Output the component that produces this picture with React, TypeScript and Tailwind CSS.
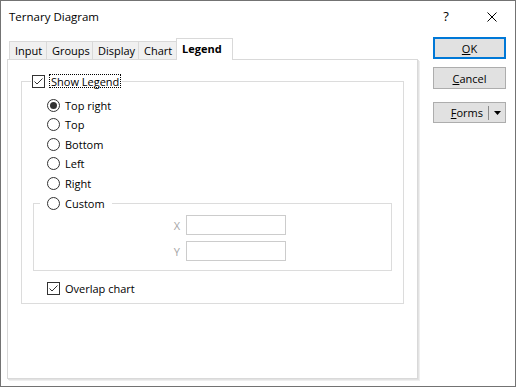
import React from "react";

const font = "font-['Segoe_UI','Open_Sans',sans-serif]";

function CheckBox({ checked }: { checked: boolean }) {
  return (
    <span className="w-[13px] h-[13px] border border-[#333333] bg-white shrink-0 flex items-center justify-center">
      {checked && (
        <svg width="11" height="11" viewBox="0 0 11 11">
          <polyline points="1.5,5.5 4,8 9.5,2.5" fill="none" stroke="#333333" strokeWidth="1" />
        </svg>
      )}
    </span>
  );
}

function Radio({ checked }: { checked: boolean }) {
  return (
    <span className="w-[13px] h-[13px] rounded-full border border-[#333333] bg-white shrink-0 flex items-center justify-center">
      {checked && <span className="w-[7px] h-[7px] rounded-full bg-[#333333]" />}
    </span>
  );
}

function RadioRow({ label, checked = false, h }: { label: string; checked?: boolean; h: string }) {
  return (
    <div className={`flex items-center gap-[5px] pl-[14px] ${h}`}>
      <Radio checked={checked} />
      <span>{label}</span>
    </div>
  );
}

export default function App() {
  return (
    <div className={`w-[516px] h-[387px] border border-[#737373] bg-white text-[11px] text-black leading-none ${font} flex flex-col`}>
      {/* Title bar */}
      <div className="h-[31px] flex items-center shrink-0">
        <span className="pl-[8px] text-[11.5px]">Ternary Diagram</span>
        <div className="ml-auto flex items-center">
          <span className="w-[46px] text-center text-[13px]">?</span>
          <span className="w-[46px] flex justify-center">
            <svg width="10" height="10" viewBox="0 0 10 10">
              <path d="M0.5 0.5 L9.5 9.5 M9.5 0.5 L0.5 9.5" stroke="#000" strokeWidth="1" />
            </svg>
          </span>
        </div>
      </div>

      {/* Main */}
      <div className="flex pl-[6px]">
        {/* Left: tabs + panel */}
        <div className="w-[411px] flex flex-col">
          <div className="flex items-end h-[21px] mt-[6px] ml-[2px]">
            <div className="h-[18px] w-[37px] border-t border-l border-[#d9d9d9] bg-[#f0f0f0] flex items-center pl-[5px]">Input</div>
            <div className="h-[18px] w-[46px] border-t border-l border-[#d9d9d9] bg-[#f0f0f0] flex items-center pl-[5px]">Groups</div>
            <div className="h-[18px] w-[46px] border-t border-l border-[#d9d9d9] bg-[#f0f0f0] flex items-center pl-[5px]">Display</div>
            <div className="h-[18px] w-[38px] border-t border-l border-[#d9d9d9] bg-[#f0f0f0] flex items-center pl-[5px]">Chart</div>
            <div className="relative z-10 h-[22px] w-[57px] -mb-[1px] border-t border-l border-r border-[#d9d9d9] bg-white flex items-center pl-[5px] pb-[2px] font-bold">Legend</div>
          </div>
          <div className="h-[320px] border border-[#d9d9d9] bg-white shadow-[1px_1px_0_#e2e2e2,2px_2px_0_#efefef]">
            <fieldset className="mt-[14px] ml-[13px] w-[383px] border border-[#dcdcdc]">
              <legend className="ml-[9px] pl-[1px] pr-[1px]">
                <div className="flex items-center gap-[4px] h-[14px]">
                  <CheckBox checked />
                  <span className="h-[14px] border border-dotted border-black px-[1px] flex items-center">Show Legend</span>
                </div>
              </legend>
              <div className="pt-[7px] px-[11px] pb-[5px]">
                <RadioRow label="Top right" checked h="h-[20px]" />
                <RadioRow label="Top" h="h-[19px]" />
                <RadioRow label="Bottom" h="h-[20px]" />
                <RadioRow label="Left" h="h-[19px]" />
                <RadioRow label="Right" h="h-[20px]" />
                <fieldset className="border border-[#dcdcdc]">
                  <legend className="ml-[6px] pl-[7px] pr-[7px]">
                    <div className="flex items-center gap-[5px] h-[20px]">
                      <Radio checked={false} />
                      <span>Custom</span>
                    </div>
                  </legend>
                  <div className="pt-[2px] pb-[9px] flex flex-col gap-[6px]">
                    <div className="flex items-center h-[20px]">
                      <span className="w-[152px] text-right pr-[6px] text-[#a6a6a6]">X</span>
                      <span className="w-[100px] h-[20px] border border-[#cccccc] bg-white" />
                    </div>
                    <div className="flex items-center h-[20px]">
                      <span className="w-[152px] text-right pr-[6px] text-[#a6a6a6]">Y</span>
                      <span className="w-[100px] h-[20px] border border-[#cccccc] bg-white" />
                    </div>
                  </div>
                </fieldset>
                <div className="mt-[7px] h-[20px] flex items-center gap-[5px] pl-[14px]">
                  <CheckBox checked />
                  <span>Overlap chart</span>
                </div>
              </div>
            </fieldset>
          </div>
        </div>

        {/* Right: buttons */}
        <div className="ml-[15px] mt-[5px] flex flex-col w-[73px]">
          <div className="h-[22px] border-2 border-[#0078d7] bg-[#e1e1e1] flex items-center justify-center">
            <span><span className="underline">O</span>K</span>
          </div>
          <div className="mt-[8px] h-[22px] border border-[#adadad] bg-[#e1e1e1] flex items-center justify-center">
            <span><span className="underline">C</span>ancel</span>
          </div>
          <div className="mt-[13px] h-[21px] border border-[#adadad] bg-[#e1e1e1] flex items-center justify-end">
            <span><span className="underline">F</span>orms</span>
            <span className="ml-[5px] w-px h-[14px] bg-[#8a8a8a]" />
            <span className="w-[16px] flex justify-center">
              <svg width="7" height="4" viewBox="0 0 7 4">
                <polygon points="0,0 7,0 3.5,4" fill="#000" />
              </svg>
            </span>
          </div>
        </div>
      </div>
    </div>
  );
}
